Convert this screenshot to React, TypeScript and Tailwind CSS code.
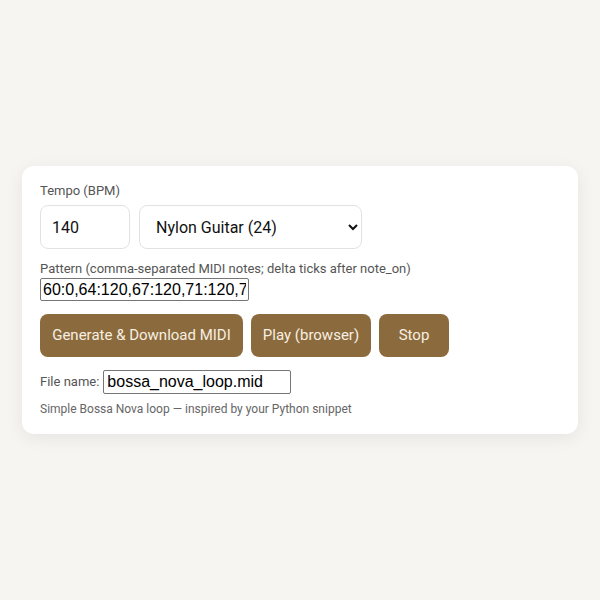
import React from "react";

export default function App() {
  return (
    <div className="min-h-screen w-full bg-[#f6f5f1] flex items-center justify-center" style={{ fontFamily: "Roboto, 'Liberation Sans', sans-serif" }}>
      <div className="w-[556px] bg-white rounded-[12px] shadow-[0_4px_18px_rgba(0,0,0,0.07)] px-[18px] pt-[17px] pb-[17px]">
        <div className="text-[13px] leading-[16px] text-[#555]">Tempo (BPM)</div>
        <div className="flex gap-[9px] mt-[6px]">
          <input
            defaultValue="140"
            className="w-[90px] h-[44px] rounded-[8px] border border-[#e2e2e2] px-[11px] text-[16px] text-[#111] outline-none"
            style={{ fontFamily: "Roboto, sans-serif" }}
          />
          <select
            defaultValue="24"
            className="w-[223px] h-[44px] rounded-[8px] border border-[#e2e2e2] pl-[12px] pr-[6px] text-[16px] text-[#111] bg-white outline-none"
            style={{ fontFamily: "Roboto, sans-serif" }}
          >
            <option value="24">Nylon Guitar (24)</option>
            <option value="25">Steel Guitar (25)</option>
          </select>
        </div>
        <div className="text-[13px] leading-[16px] text-[#555] mt-[12px]">Pattern (comma-separated MIDI notes; delta ticks after note_on)</div>
        <input
          defaultValue="60:0,64:120,67:120,71:120,72:120,71:120,67:120,64:120"
          className="block w-[209px] h-[23px] border border-[#767676] rounded-[2px] px-[2px] text-[16px] text-black mt-[1px]"
          style={{ fontFamily: "'Liberation Sans', Arial, sans-serif" }}
        />
        <div className="flex gap-[8px] mt-[13px]">
          <button className="h-[43px] w-[203px] rounded-[8px] bg-[#8b6b3d] text-[#f7efe1] text-[15px]">Generate &amp; Download MIDI</button>
          <button className="h-[43px] w-[120px] rounded-[8px] bg-[#8b6b3d] text-[#f7efe1] text-[15px]">Play (browser)</button>
          <button className="h-[43px] w-[70px] rounded-[8px] bg-[#8b6b3d] text-[#f7efe1] text-[15px]">Stop</button>
        </div>
        <div className="flex items-center mt-[13px]">
          <span className="text-[13px] text-[#555] mr-[4px]">File name:</span>
          <input
            defaultValue="bossa_nova_loop.mid"
            className="w-[188px] h-[24px] border border-[#767676] rounded-[2px] px-[3px] text-[16px] text-black"
            style={{ fontFamily: "'Liberation Sans', Arial, sans-serif" }}
          />
        </div>
        <div className="text-[12px] leading-[15px] text-[#666] mt-[8px]">Simple Bossa Nova loop — inspired by your Python snippet</div>
      </div>
    </div>
  );
}
